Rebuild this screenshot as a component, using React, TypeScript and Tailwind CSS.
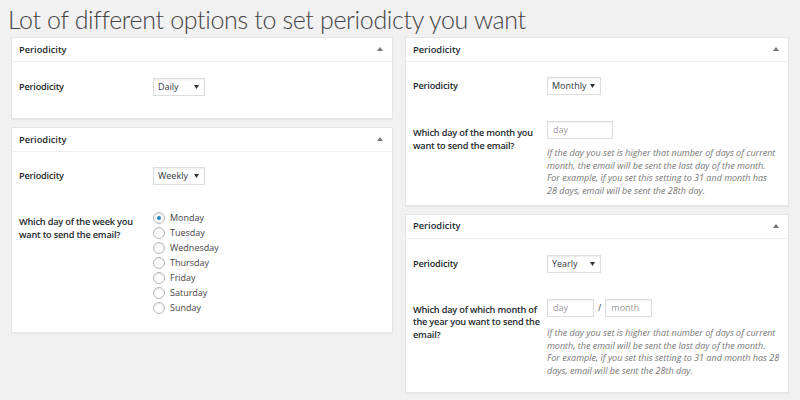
import React from "react";

const days = ["Monday", "Tuesday", "Wednesday", "Thursday", "Friday", "Saturday", "Sunday"];

function Box({ children }: { children: React.ReactNode }) {
  return (
    <div className="bg-white border border-[#e5e5e5] shadow-[0_1px_1px_rgba(0,0,0,0.04)]">
      <div className="h-[24px] flex items-center justify-between pl-[7px] pr-[9px] border-b border-[#eee]">
        <span className="text-[9.3px] font-semibold text-[#23282d]">Periodicity</span>
        <svg width="6" height="4" viewBox="0 0 6 4" className="mt-[-1px]">
          <path d="M3 0L6 4H0z" fill="#72777c" />
        </svg>
      </div>
      {children}
    </div>
  );
}

function Row({ label, children, pb = "pb-[13px]", lpt = "pt-0" }: { label: string[]; children: React.ReactNode; pb?: string; lpt?: string }) {
  return (
    <div className={`flex pt-[13px] ${pb} pl-[7px]`}>
      <div className={`w-[134px] shrink-0 ${lpt} text-[9.2px] leading-[12.5px] tracking-[-0.2px] font-semibold text-[#23282d]`}>
        {label.map((l) => (
          <div key={l} className="whitespace-nowrap">{l}</div>
        ))}
      </div>
      <div className="flex-1">{children}</div>
    </div>
  );
}

function Select({ value, w }: { value: string; w: string }) {
  return (
    <div className={`${w} h-[18px] border border-[#ddd] shadow-[0_1px_2px_rgba(0,0,0,0.07)_inset] flex items-center justify-between pl-[4px] pr-[5px] text-[9px] text-[#32373c]`}>
      <span>{value}</span>
      <svg width="5" height="4" viewBox="0 0 5 4">
        <path d="M0 0H5L2.5 4z" fill="#333" />
      </svg>
    </div>
  );
}

function Input({ ph, w }: { ph: string; w: string }) {
  return (
    <div className={`${w} h-[18px] border border-[#ddd] shadow-[0_1px_2px_rgba(0,0,0,0.07)_inset] flex items-center pl-[5px] text-[9px] text-[#999]`}>
      {ph}
    </div>
  );
}

function Note({ lines, mt = "mt-[8px]" }: { lines: string[]; mt?: string }) {
  return (
    <div className={`${mt} text-[9px] leading-[12.7px] italic text-[#777]`}>
      {lines.map((l) => (
        <div key={l} className="whitespace-nowrap">{l}</div>
      ))}
    </div>
  );
}

export default function App() {
  return (
    <div className="w-[800px] h-[400px] bg-[#f1f1f1] overflow-hidden" style={{ fontFamily: "'Open Sans', sans-serif" }}>
      <h1 className="pl-[8px] pt-[4px] h-[37px] text-[25px] leading-[30px] font-light text-[#444] tracking-[-0.35px]" style={{ fontFamily: "Lato, sans-serif" }}>
        Lot of different options to set periodicty you want
      </h1>
      <div className="flex gap-[12px] px-[11px]">
        <div className="w-[382px] flex flex-col gap-[8px]">
          <Box>
            <div className="pt-[3px] pb-[9px]">
              <Row label={["Periodicity"]} lpt="pt-[3px]">
                <Select value="Daily" w="w-[52px]" />
              </Row>
            </div>
          </Box>
          <Box>
            <div className="pt-[2px] pb-[4px]">
              <Row label={["Periodicity"]} lpt="pt-[3px]">
                <Select value="Weekly" w="w-[52px]" />
              </Row>
              <Row label={["Which day of the week you", "want to send the email?"]} lpt="pt-[5px]">
                <div className="flex flex-col mt-[-1px]">
                  {days.map((d, i) => (
                    <div key={d} className="flex items-center h-[15px] gap-[5px] text-[9px] text-[#444]">
                      <span className="w-[12px] h-[12px] rounded-full border border-[#b4b9be] bg-white flex items-center justify-center shadow-[0_1px_2px_rgba(0,0,0,0.1)_inset]">
                        {i === 0 && <span className="w-[4px] h-[4px] rounded-full bg-[#1e8cbe]" />}
                      </span>
                      {d}
                    </div>
                  ))}
                </div>
              </Row>
            </div>
          </Box>
        </div>
        <div className="w-[384px] flex flex-col gap-[8px]">
          <Box>
            <div className="pt-[2px]">
              <Row label={["Periodicity"]} lpt="pt-[3px]">
                <Select value="Monthly" w="w-[54px]" />
              </Row>
              <Row label={["Which day of the month you", "want to send the email?"]} lpt="pt-[6px]" pb="pb-[7px]">
                <Input ph="day" w="w-[66px]" />
                <Note
                  lines={[
                    "If the day you set is higher that number of days of current",
                    "month, the email will be sent the last day of the month.",
                    "For example, if you set this setting to 31 and month has",
                    "28 days, email will be sent the 28th day.",
                  ]}
                />
              </Row>
            </div>
          </Box>
          <Box>
            <div className="pt-[3px] pb-[1px]">
              <Row label={["Periodicity"]} lpt="pt-[3px]">
                <Select value="Yearly" w="w-[54px]" />
              </Row>
              <Row label={["Which day of which month of", "the year you want to send the", "email?"]} lpt="pt-[5px]">
                <div className="flex items-center">
                  <Input ph="day" w="w-[47px]" />
                  <span className="mx-[4px] text-[9px] text-[#444]">/</span>
                  <Input ph="month" w="w-[47px]" />
                </div>
                <Note
                  mt="mt-[10px]"
                  lines={[
                    "If the day you set is higher that number of days of current",
                    "month, the email will be sent the last day of the month.",
                    "For example, if you set this setting to 31 and month has 28",
                    "days, email will be sent the 28th day.",
                  ]}
                />
              </Row>
            </div>
          </Box>
        </div>
      </div>
    </div>
  );
}
